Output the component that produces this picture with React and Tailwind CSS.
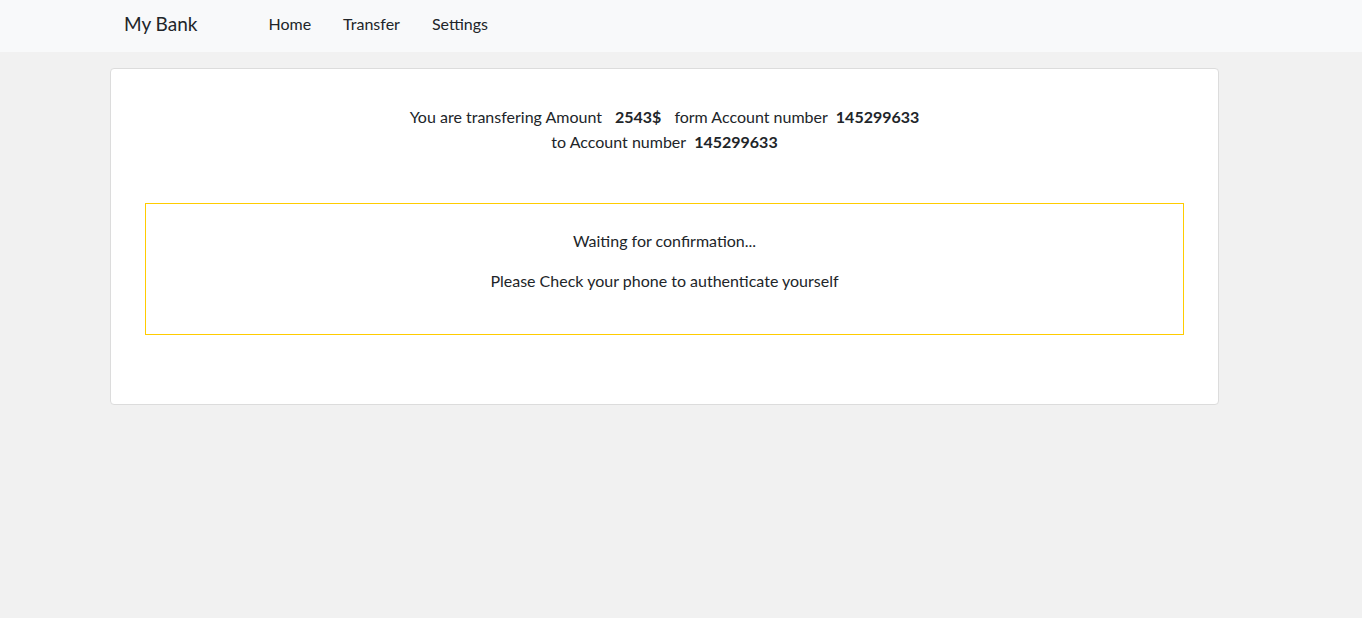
import React from "react";

export default function App() {
  const from = "145299633";
  const to = "145299633";
  const amount = "2543$";

  return (
    <div className="min-h-screen bg-[#f1f1f1] font-['Lato',sans-serif] text-[#212529]">
      <nav className="h-[52px] bg-[#f8f9fa] flex items-center pb-[5px]">
        <span className="ml-[124px] text-[19px] leading-none">My Bank</span>
        <div className="ml-[71px] flex gap-[32px] text-[16px] leading-none text-[#212529]">
          <a href="#">Home</a>
          <a href="#">Transfer</a>
          <a href="#">Settings</a>
        </div>
      </nav>

      <main className="pt-4">
        <section className="ml-[110px] w-[1109px] rounded border border-[#dcdcdc] bg-white px-[34px] pt-[35px] pb-[69px]">
          <div className="text-center text-[16px] leading-[25px]">
            <p>
              You are transfering Amount
              <b className="mx-[13px] font-bold">{amount}</b>
              form Account number
              <b className="ml-2 font-bold">{from}</b>
            </p>
            <p>
              to Account number
              <b className="ml-2 font-bold">{to}</b>
            </p>
          </div>

          {/* waiting box */}
          <div className="mt-[49px] border border-[#ffcc00] px-6 py-[25px] text-center text-[16px] leading-[24px]">
            <p className="mb-4">Waiting for confirmation...</p>
            <p className="mb-4">Please Check your phone to authenticate yourself</p>
          </div>
        </section>
      </main>
    </div>
  );
}
